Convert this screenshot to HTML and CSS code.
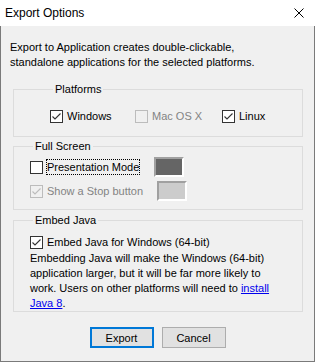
FILE: index.html
```html
<!DOCTYPE html>
<html lang="en">
<head>
<meta charset="UTF-8" />
<title>Export Options</title>
<link rel="stylesheet" href="styles.css">
</head>
<body>

<div class="window">
  <div class="titlebar">
    <span class="title">Export Options</span>
    <svg class="close" width="10" height="10" viewBox="0 0 10 10">
      <path d="M0.5 0.5 L9.5 9.5 M9.5 0.5 L0.5 9.5" stroke="#000" stroke-width="1" fill="none"/>
    </svg>
  </div>

  <div class="content">
    <p class="intro">Export to Application creates double-clickable,<br>standalone applications for the selected platforms.</p>

    <fieldset class="group platforms">
      <legend>Platforms</legend>
      <div class="platform-row">
        <label class="check"><span class="box"><svg viewBox="0 0 13 13"><path d="M2.5 6.5 L5 9 L10.5 3.5"/></svg></span>Windows</label>
        <label class="check disabled"><span class="box"></span>Mac OS X</label>
        <label class="check"><span class="box"><svg viewBox="0 0 13 13"><path d="M2.5 6.5 L5 9 L10.5 3.5"/></svg></span>Linux</label>
      </div>
    </fieldset>

    <fieldset class="group fullscreen">
      <legend>Full Screen</legend>
      <div class="option-row">
        <label class="check"><span class="box"></span><span class="focus">Presentation Mode</span></label>
        <span class="swatch dark"></span>
      </div>
      <div class="option-row">
        <label class="check disabled"><span class="box"><svg viewBox="0 0 13 13"><path d="M2.5 6.5 L5 9 L10.5 3.5"/></svg></span>Show a Stop button</label>
        <span class="swatch light"></span>
      </div>
    </fieldset>

    <fieldset class="group java">
      <legend>Embed Java</legend>
      <label class="check"><span class="box"><svg viewBox="0 0 13 13"><path d="M2.5 6.5 L5 9 L10.5 3.5"/></svg></span>Embed Java for Windows (64-bit)</label>
      <p class="note">Embedding Java will make the Windows (64-bit)<br>application larger, but it will be far more likely to<br>work. Users on other platforms will need to <a href="#">install<br>Java 8</a>.</p>
    </fieldset>

    <div class="buttons">
      <button class="btn default">Export</button>
      <button class="btn">Cancel</button>
    </div>
  </div>
</div>

</body>
</html>
```

FILE: styles.css
```css
html, body {
  margin: 0; padding: 0;
  background: #f0f0f0;
  font-family: "Liberation Sans", Arial, sans-serif;
  font-size: 11px;
  color: #000;
}

.window {
  width: 315px;
  height: 362px;
  display: flex;
  flex-direction: column;
}

.titlebar {
  height: 26px;
  background: #fff;
  display: flex;
  align-items: center;
  justify-content: space-between;
  padding: 0 11px 0 5px;
  flex-shrink: 0;
}
.title { line-height: 15px; font-size: 12px; }
.close { display: block; }

.content {
  flex: 1;
  background: #f0f0f0;
  border: 1px solid #7a7a7a;
  border-top: none;
  padding-top: 14px;
}

.intro {
  margin: 0 0 12px 9px;
  line-height: 15px;
}

.group {
  margin: 0 11px 0 12px;
  padding: 0;
  border: 1px solid #dcdcdc;
  border-radius: 0;
  min-width: 0;
}
.group legend {
  margin-left: 3px;
  padding: 0 2px;
  line-height: 15px;
}

.check {
  display: flex;
  align-items: center;
  gap: 4px;
  line-height: 15px;
  white-space: nowrap;
}
.box {
  width: 11px;
  height: 11px;
  border: 1px solid #333;
  background: #fff;
  flex-shrink: 0;
}
.box svg {
  display: block;
  width: 13px;
  height: 13px;
  margin: -1px;
}
.box path {
  fill: none;
  stroke: #333;
  stroke-width: 1.1;
}
.check.disabled { color: #838383; }
.check.disabled .box { border-color: #bcbcbc; background: transparent; }
.check.disabled .box path { stroke: #bcbcbc; }

.platforms { padding: 12px 0 12px 36px; }
.platform-row {
  display: grid;
  grid-template-columns: 85px 87px auto;
  height: 15px;
}

.fullscreen {
  margin-top: 2px;
  padding: 3px 0 8px 16px;
}
.option-row {
  display: flex;
  align-items: center;
  height: 20px;
}
.option-row + .option-row { margin-top: 4px; }
.focus {
  display: inline-block;
  height: 16px;
  line-height: 16px;
  padding: 0 1px;
  margin-left: -1px;
  outline: 1px dotted #000;
  outline-offset: -1px;
}
.swatch {
  width: 26px;
  height: 16px;
  margin-left: 14px;
  border: 2px solid;
  border-color: #a0a0a0 #fff #fff #a0a0a0;
}
.swatch.dark { background: #656565; }
.swatch.light { background: #cccccc; }

.java {
  margin-top: 3px;
  padding: 7px 0 0 16px;
}
.note {
  margin: 1px 0 0;
  line-height: 15px;
  white-space: nowrap;
}
.note a { color: #0000ee; }

.buttons {
  display: flex;
  justify-content: center;
  gap: 8px;
  margin-top: 15px;
}
.btn {
  width: 64px;
  height: 21px;
  font: inherit;
  background: #e1e1e1;
  border: 1px solid #adadad;
  padding: 0;
  color: #000;
}
.btn.default {
  border-color: #0078d7;
  box-shadow: inset 0 0 0 1px #0078d7;
}
```
